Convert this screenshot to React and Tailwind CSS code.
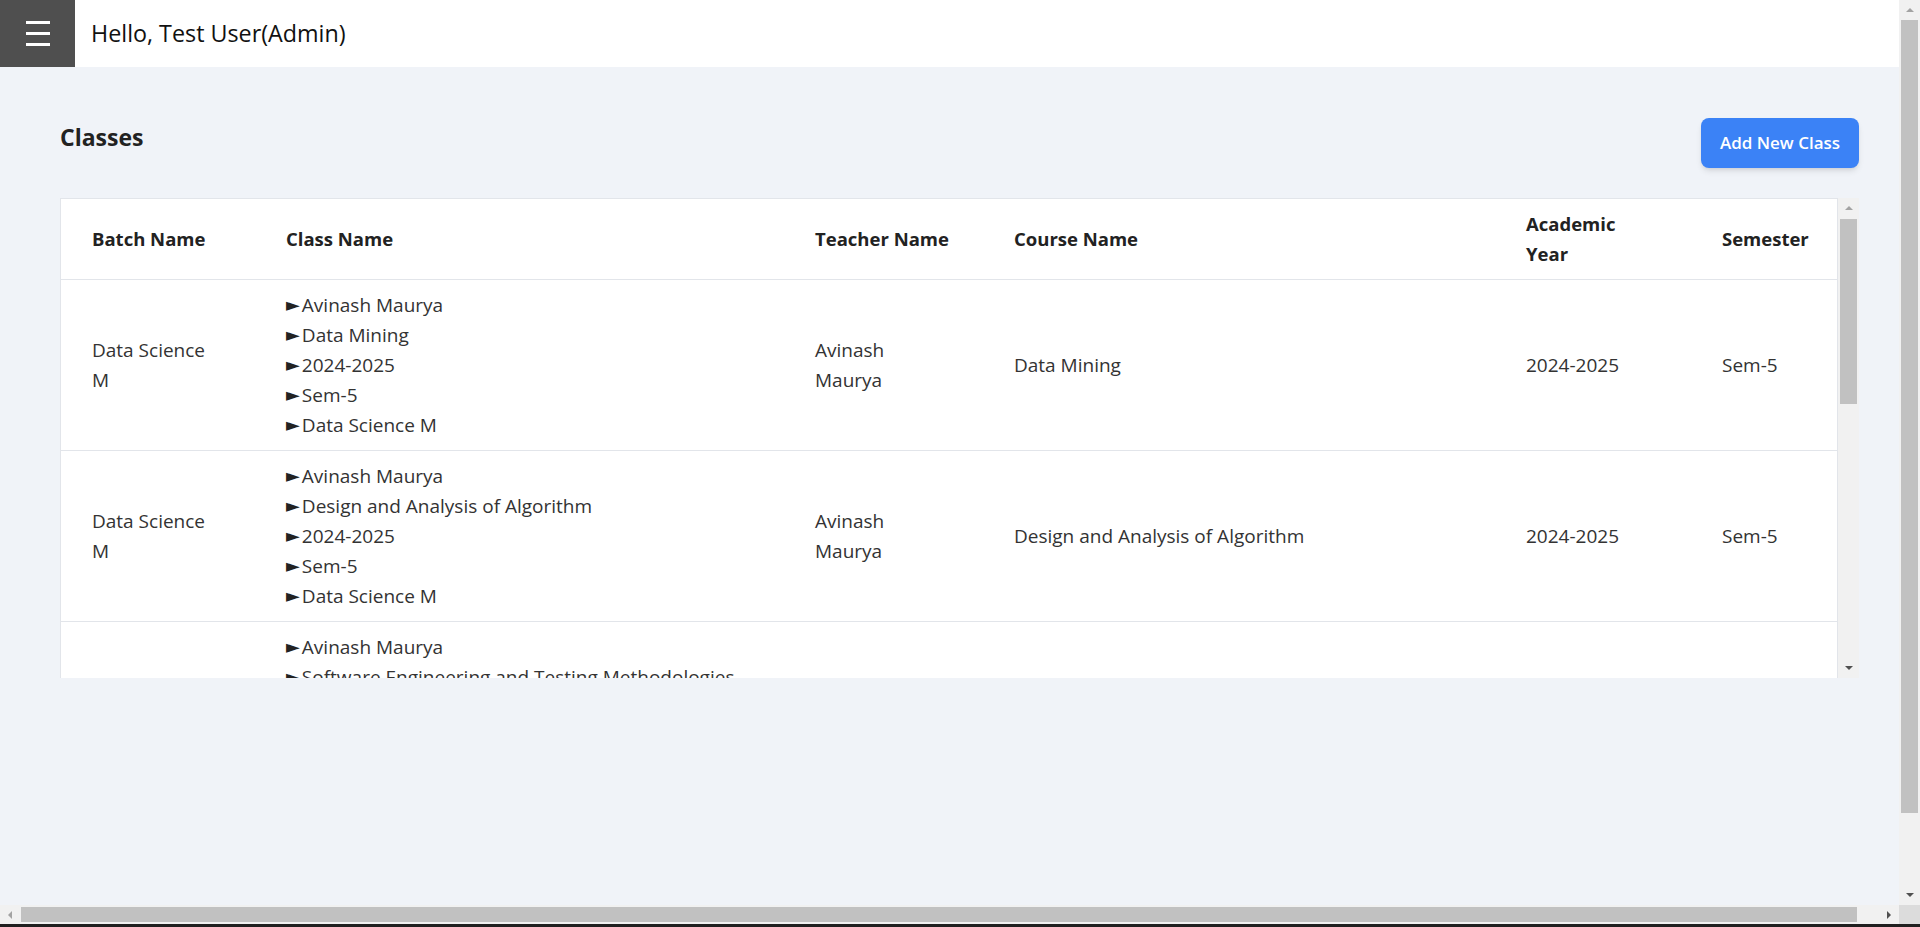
const rows = [
  {
    batch: "Data Science M",
    lines: ["Avinash Maurya", "Data Mining", "2024-2025", "Sem-5", "Data Science M"],
    teacher: "Avinash Maurya",
    course: "Data Mining",
    year: "2024-2025",
    sem: "Sem-5",
  },
  {
    batch: "Data Science M",
    lines: ["Avinash Maurya", "Design and Analysis of Algorithm", "2024-2025", "Sem-5", "Data Science M"],
    teacher: "Avinash Maurya",
    course: "Design and Analysis of Algorithm",
    year: "2024-2025",
    sem: "Sem-5",
  },
  {
    batch: "Data Science M",
    lines: ["Avinash Maurya", "Software Engineering and Testing Methodologies", "2024-2025", "Sem-5", "Data Science M"],
    teacher: "Avinash Maurya",
    course: "Software Engineering and Testing Methodologies",
    year: "2024-2025",
    sem: "Sem-5",
  },
  {
    batch: "Data Science M",
    lines: ["Avinash Maurya", "Machine Learning", "2024-2025", "Sem-5", "Data Science M"],
    teacher: "Avinash Maurya",
    course: "Machine Learning",
    year: "2024-2025",
    sem: "Sem-5",
  },
];

function Arrow({ dir, dark }) {
  const color = dark ? "#505050" : "#a3a3a3";
  const pts = {
    up: "0,5 4,1 8,5",
    down: "0,1 4,5 8,1",
    left: "5,0 1,4 5,8",
    right: "1,0 5,4 1,8",
  }[dir];
  const box = dir === "left" || dir === "right" ? "0 0 6 8" : "0 0 8 6";
  return (
    <svg viewBox={box} className={dir === "left" || dir === "right" ? "h-2 w-[6px]" : "h-[6px] w-2"}>
      <polygon points={pts} fill={color} />
    </svg>
  );
}

function VScrollbar({ thumbTop, thumbHeight }) {
  return (
    <div className="flex w-[21px] shrink-0 flex-col bg-[#f1f1f1]">
      <div className="flex h-[20px] shrink-0 items-center justify-center">
        <Arrow dir="up" />
      </div>
      <div className="flex flex-1 flex-col">
        <div className={`${thumbTop} shrink-0`} />
        <div className={`${thumbHeight} mx-[2px] shrink-0 bg-[#c1c1c1]`} />
      </div>
      <div className="flex h-[20px] shrink-0 items-center justify-center">
        <Arrow dir="down" dark />
      </div>
    </div>
  );
}

export default function App() {
  return (
    <div className="flex h-screen w-full flex-col overflow-hidden font-['Open_Sans',sans-serif] text-[#222]">
      <div className="flex min-h-0 flex-1">
        <div className="flex min-w-0 flex-1 flex-col bg-[#f0f3f8]">
          <header className="flex h-[67px] shrink-0 items-center bg-white">
            <button className="flex h-full w-[75px] flex-col items-center justify-center gap-[8px] bg-[#4f4f4f]">
              <span className="h-[3px] w-[24px] bg-white" />
              <span className="h-[3px] w-[24px] bg-white" />
              <span className="h-[3px] w-[24px] bg-white" />
            </button>
            <span className="ml-[16px] text-[23.3px] text-[#111]">Hello, Test User(Admin)</span>
          </header>

          <main className="pl-[60px] pr-[40px] pt-[51px]">
            <div className="flex items-start justify-between">
              <h1 className="mt-[3px] text-[23px] font-bold leading-[32px] text-[#222]">Classes</h1>
              <button className="h-[50px] w-[158px] rounded-lg bg-[#3b82f6] text-[17px] font-semibold text-white shadow-md">
                Add New Class
              </button>
            </div>

            <div className="mt-[30px] flex h-[480px]">
              <div className="min-w-0 flex-1 overflow-hidden border-l border-r border-t border-[#e2e5ea] bg-white">
                <table className="w-full table-fixed border-collapse text-left text-[19px] leading-[30px]">
                  <colgroup>
                    <col className="w-[194px]" />
                    <col className="w-[529px]" />
                    <col className="w-[199px]" />
                    <col className="w-[512px]" />
                    <col className="w-[196px]" />
                    <col />
                  </colgroup>
                  <thead>
                    <tr className="border-b border-[#e2e5ea] text-[18.5px] text-[#222]">
                      <th className="h-[80px] whitespace-nowrap pl-[31px] font-bold">Batch Name</th>
                      <th className="whitespace-nowrap pl-[31px] font-bold">Class Name</th>
                      <th className="whitespace-nowrap pl-[31px] font-bold">Teacher Name</th>
                      <th className="whitespace-nowrap pl-[31px] font-bold">Course Name</th>
                      <th className="pl-[31px] font-bold">
                        <div className="w-[110px]">Academic Year</div>
                      </th>
                      <th className="whitespace-nowrap pl-[31px] font-bold">Semester</th>
                    </tr>
                  </thead>
                  <tbody className="text-[#333]">
                    {rows.map((r, i) => (
                      <tr key={i} className="border-b border-[#e2e5ea]">
                        <td className="pl-[31px]">
                          <div className="w-[120px]">{r.batch}</div>
                        </td>
                        <td className="py-[10px] pl-[31px]">
                          {r.lines.map((l, j) => (
                            <div key={j} className="flex items-center whitespace-nowrap">
                              <span className="mr-[2px] font-['DejaVu_Sans',sans-serif] text-[18px] leading-none text-[#222]">►</span>
                              <span>{l}</span>
                            </div>
                          ))}
                        </td>
                        <td className="pl-[31px]">
                          <div className="w-[100px]">{r.teacher}</div>
                        </td>
                        <td className="pl-[31px]">{r.course}</td>
                        <td className="whitespace-nowrap pl-[31px]">{r.year}</td>
                        <td className="whitespace-nowrap pl-[31px]">{r.sem}</td>
                      </tr>
                    ))}
                  </tbody>
                </table>
              </div>
              <VScrollbar thumbTop="h-px" thumbHeight="h-[185px]" />
            </div>
          </main>
        </div>
        <VScrollbar thumbTop="h-0" thumbHeight="h-[793px]" />
      </div>

      <div className="flex h-[19px] shrink-0 bg-[#f1f1f1]">
        <div className="flex w-[20px] items-center justify-center">
          <Arrow dir="left" />
        </div>
        <div className="flex flex-1 items-center">
          <div className="ml-px h-[15px] w-[1836px] bg-[#c1c1c1]" />
        </div>
        <div className="flex w-[20px] items-center justify-center">
          <Arrow dir="right" dark />
        </div>
        <div className="w-[21px] bg-[#dcdcdc]" />
      </div>
      <div className="h-[3px] shrink-0 bg-[#202020]" />
    </div>
  );
}
